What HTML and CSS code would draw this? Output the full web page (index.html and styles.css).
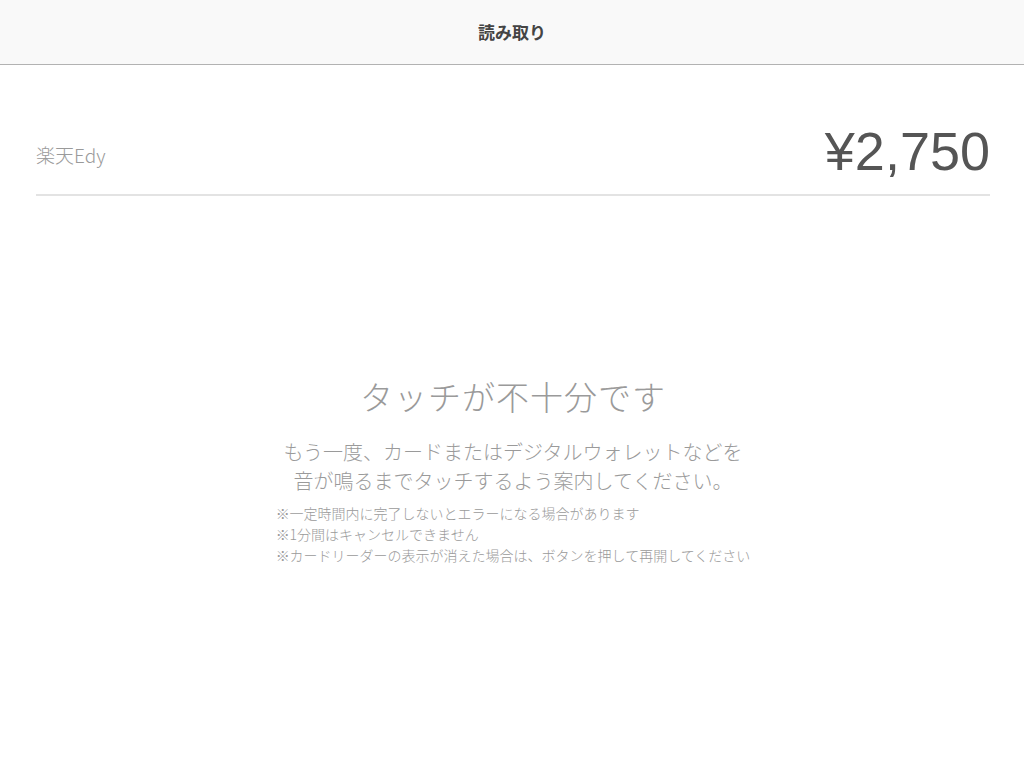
FILE: index.html
```html
<!DOCTYPE html>
<html lang="ja">
<head>
<meta charset="utf-8">
<link rel="stylesheet" href="styles.css">
</head>
<body>
<header class="topbar">
  <h1 class="topbar-title">読み取り</h1>
</header>
<main class="content">
  <section class="summary">
    <span class="brand">楽天Edy</span>
    <span class="amount">¥2,750</span>
  </section>
  <section class="message">
    <h2 class="message-title">タッチが不十分です</h2>
    <p class="message-body">もう一度、カードまたはデジタルウォレットなどを<br>音が鳴るまでタッチするよう案内してください。</p>
    <ul class="notes">
      <li>※一定時間内に完了しないとエラーになる場合があります</li>
      <li>※1分間はキャンセルできません</li>
      <li>※カードリーダーの表示が消えた場合は、ボタンを押して再開してください</li>
    </ul>
  </section>
</main>
</body>
</html>
```

FILE: styles.css
```css
* { box-sizing: border-box; }
html, body {
  margin: 0;
  padding: 0;
  background: #ffffff;
  font-family: "Noto Sans CJK JP", "Noto Sans", sans-serif;
}
.topbar {
  height: 65px;
  background: #f9f9f9;
  border-bottom: 1px solid #b2b2b2;
  display: flex;
  align-items: center;
  justify-content: center;
}
.topbar-title {
  margin: 0 0 2px;
  font-size: 17px;
  font-weight: 700;
  color: #444444;
  line-height: 1;
}
.content {
  padding: 0 34px 0 36px;
}
.summary {
  margin-top: 52px;
  height: 79px;
  border-bottom: 2px solid #e3e3e3;
  display: flex;
  justify-content: space-between;
  align-items: center;
}
.brand {
  font-size: 19px;
  color: #9a9a9a;
  font-weight: 300;
  padding-bottom: 2px;
}
.amount {
  font-family: "Liberation Sans", sans-serif;
  font-size: 54px;
  color: #555555;
  line-height: 1;
  padding-bottom: 9px;
}
.message {
  display: flex;
  flex-direction: column;
  align-items: center;
  margin-top: 181px;
}
.message-title {
  margin: 0;
  font-size: 33px;
  font-weight: 300;
  color: #9a9a9a;
  line-height: 1.2;
  letter-spacing: 1px;
}
.message-body {
  margin: 20px 0 0;
  font-size: 20px;
  color: #9a9a9a;
  font-weight: 300;
  line-height: 29px;
  text-align: center;
}
.notes {
  list-style: none;
  margin: 8px 0 0;
  padding: 0;
  font-size: 14px;
  color: #9a9a9a;
  line-height: 21px;
  font-weight: 300;
}
```
